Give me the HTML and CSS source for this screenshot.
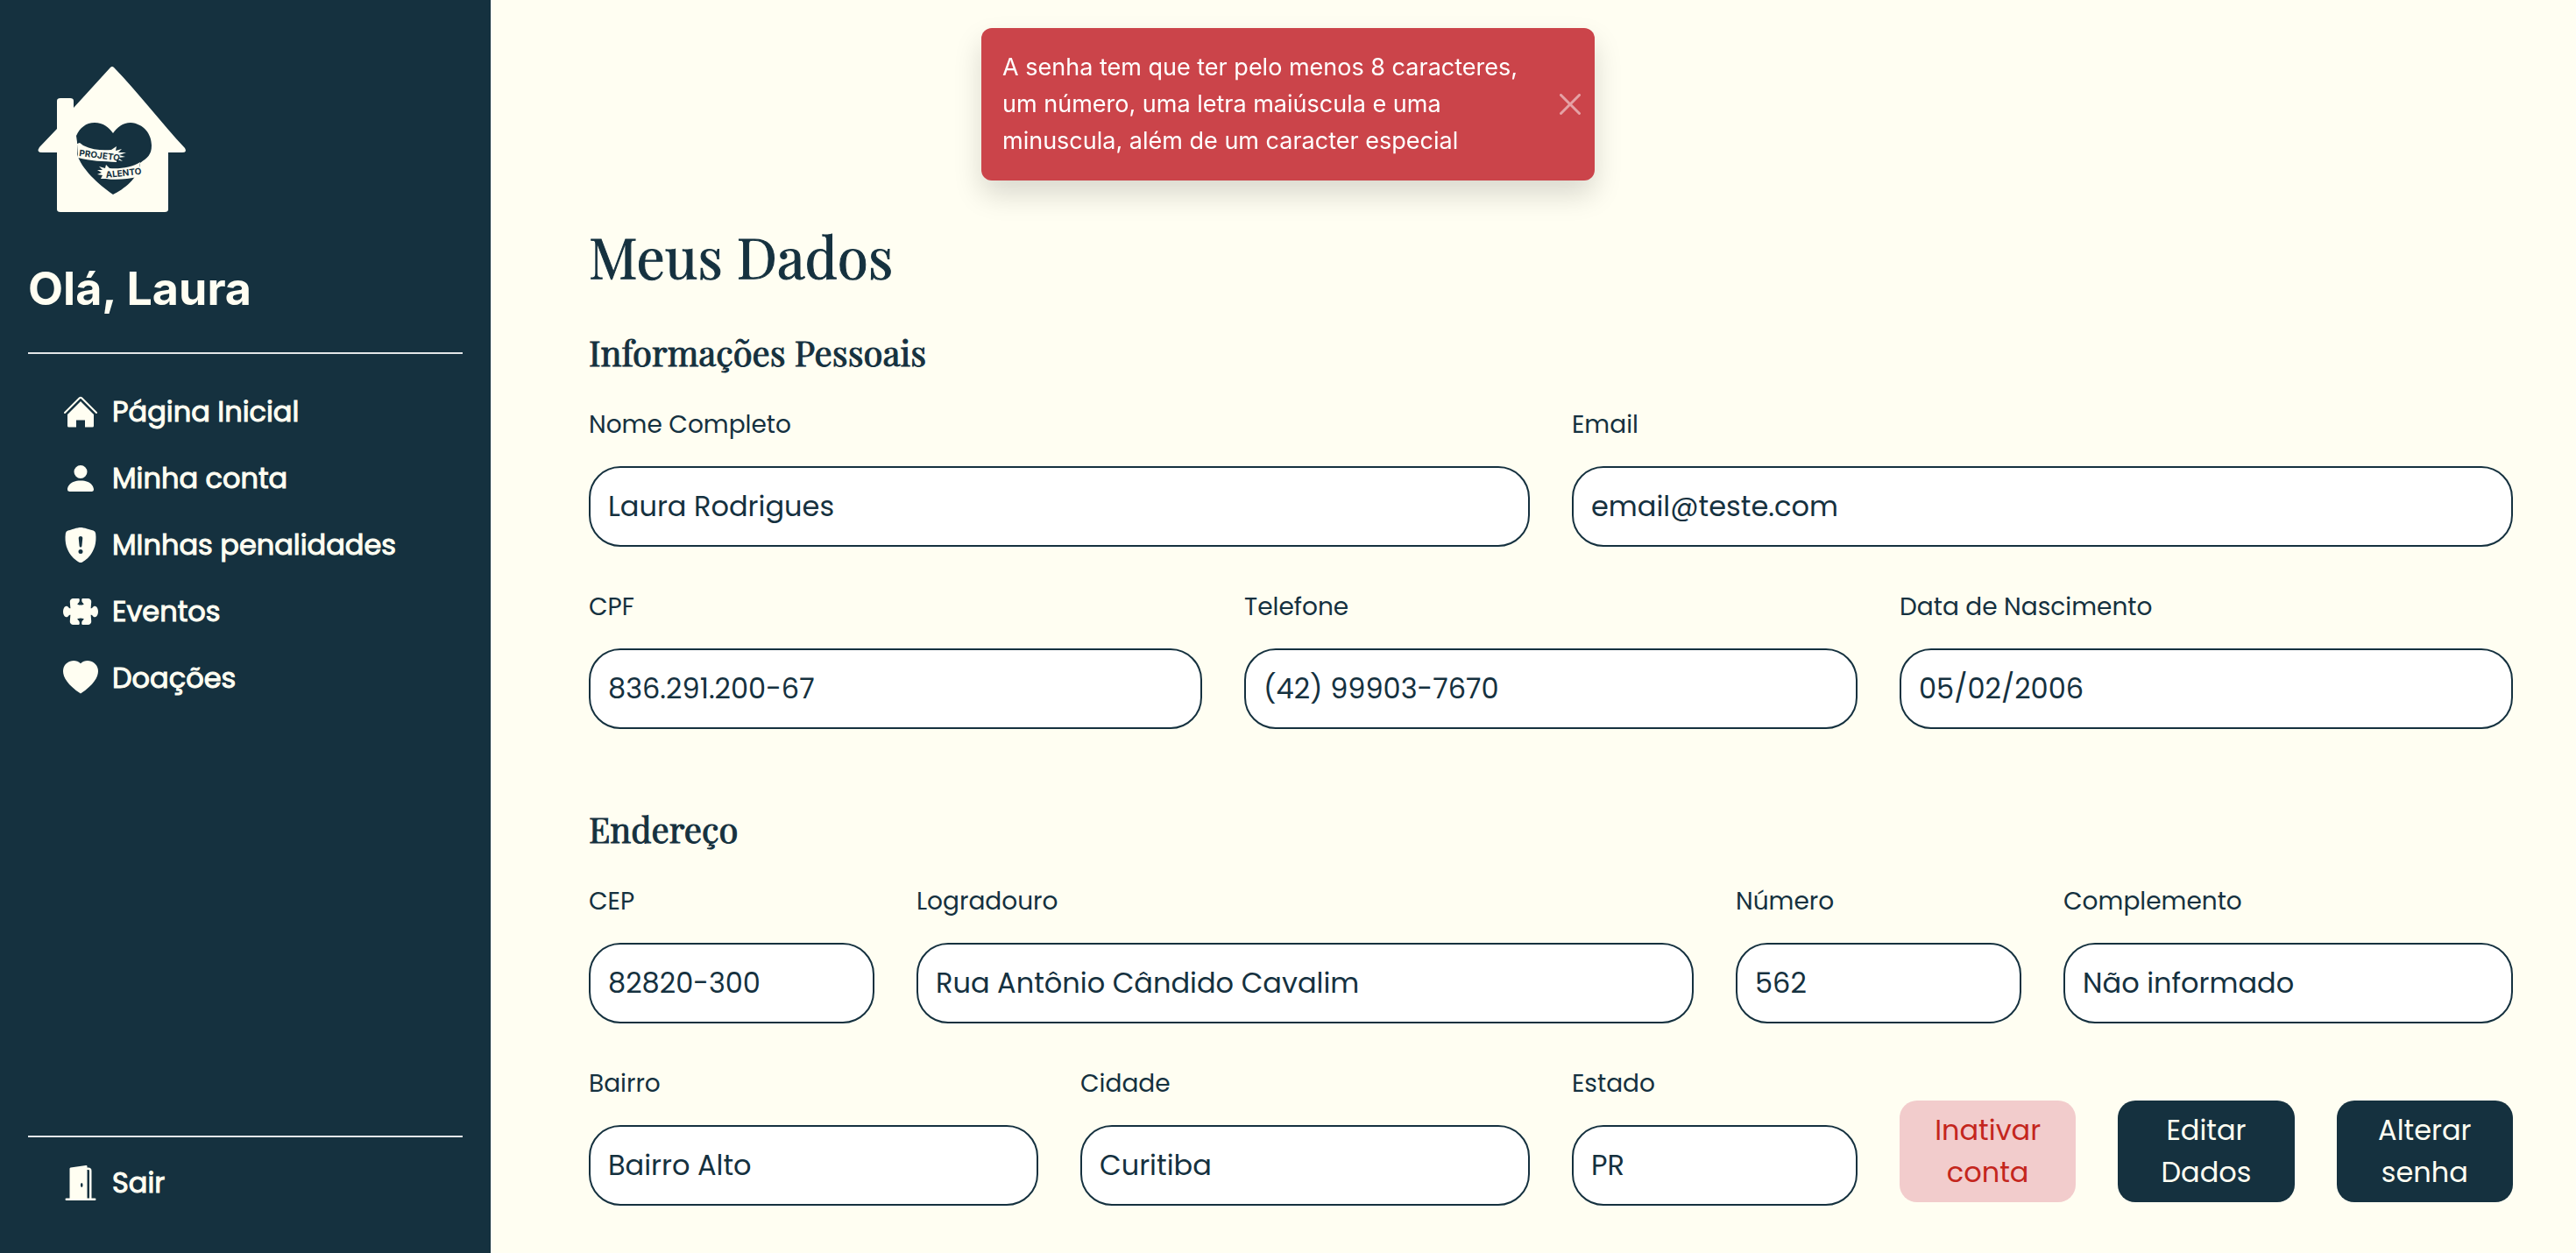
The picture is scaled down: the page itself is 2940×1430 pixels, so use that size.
FILE: index.html
```html
<!DOCTYPE html>
<html lang="pt-BR">
<head>
<meta charset="utf-8">
<meta name="viewport" content="width=device-width, initial-scale=1">
<title>Meus Dados</title>
<link rel="stylesheet" href="styles.css">
</head>
<body>
<div class="layout">
  <aside class="sidebar">
    <svg class="logo" viewBox="32 64 192 192" role="img" aria-label="Projeto Alento">
      <path class="logo-cream" d="M126 77q2-2 4 0C158 106 184 140 211 169q3 5-3 5H192V239q0 3-4 3H69q-4 0-4-3V174H48q-7 0-3-6L65 147V115q0-3 4-3H80q4 0 4 3V123z"/>
      <path class="logo-dark" d="M129 152C134 145 140 140 149 140C164 141 173 153 173 166C173 177 168 180 160 186C158 204 141 216 129 222C112 210 93 193 88 176L88 162L87 155C91 146 98 140 108 140C118 140 124 145 129 152Z"/>
      <path class="logo-cream" d="M88 164l3-1 4 3c10 5 22 6 32 5l6-4-1 5 7-2-4 4 9 0-8 3 7 2-8 1 5 4-7-2 0 3c-15-1-30-1-44-5z"/>
      <path class="logo-cream" d="M160 185c-9 6-23 8-35 7l-4-4-1 4-7-2 4 4-6 0 5 3-5 2 6 1-2 4 6 0c13 2 25 0 36-2z"/>
      <text class="logo-text" x="90" y="178" transform="rotate(7 90 178)">PROJETO</text>
      <text class="logo-text" x="121" y="203" transform="rotate(-6 121 203)">ALENTO</text>
    </svg>
    <h2 class="greeting">Olá, Laura</h2>
    <hr class="rule">
    <nav class="menu">
      <a class="menu-link" href="#"><svg class="icon" viewBox="0 0 40 40"><path class="roof" d="M2 21 18.500 4.500q1.500-1.500 3 0L38 21"/><path d="M20 8 35 23V36q0 1.500-1.500 1.500H25V29.500H15V37.500H6.500Q5 37.500 5 36V23z"/></svg>Página Inicial</a>
      <a class="menu-link" href="#"><svg class="icon" viewBox="0 0 16 16"><path d="M3 14s-1 0-1-1 1-4 6-4 6 3 6 4-1 1-1 1H3zm5-6a3 3 0 1 0 0-6 3 3 0 0 0 0 6z"/></svg>Minha conta</a>
      <a class="menu-link" href="#"><svg class="icon" viewBox="0 0 16 16"><path d="M8 0c-.69 0-1.843.265-2.928.56-1.11.3-2.229.655-2.887.87a1.54 1.54 0 0 0-1.044 1.262c-.596 4.477.787 7.795 2.465 9.99a11.777 11.777 0 0 0 2.517 2.453c.386.273.744.482 1.048.625.28.132.581.24.829.24s.548-.108.829-.24a7.159 7.159 0 0 0 1.048-.625 11.775 11.775 0 0 0 2.517-2.453c1.678-2.195 3.061-5.513 2.465-9.99a1.541 1.541 0 0 0-1.044-1.263 62.467 62.467 0 0 0-2.887-.87C9.843.266 8.69 0 8 0zm-.55 8.502L7.1 4.995a.905.905 0 1 1 1.8 0l-.35 3.507a.552.552 0 0 1-1.1 0zM8.002 12a1 1 0 1 1 0-2 1 1 0 0 1 0 2z"/></svg>MInhas penalidades</a>
      <a class="menu-link" href="#"><svg class="icon" viewBox="0 0 16 16"><path d="M3.112 3.645A1.5 1.5 0 0 1 4.605 2H7a.5.5 0 0 1 .5.5v.382c0 .696-.497 1.182-.872 1.469a.459.459 0 0 0-.115.118.113.113 0 0 0-.012.025L6.5 4.5v.003l.003.01c.004.01.014.028.036.053a.86.86 0 0 0 .27.194C7.09 4.9 7.51 5 8 5c.492 0 .912-.1 1.19-.24a.86.86 0 0 0 .271-.194.213.213 0 0 0 .039-.063v-.009a.112.112 0 0 0-.012-.025.459.459 0 0 0-.115-.118c-.375-.287-.872-.773-.872-1.469V2.5A.5.5 0 0 1 9 2h2.395a1.5 1.5 0 0 1 1.493 1.645L12.645 6.5h.237c.195 0 .42-.147.675-.48.21-.274.528-.52.943-.52.568 0 .947.447 1.154.862C15.877 6.807 16 7.387 16 8s-.123 1.193-.346 1.638c-.207.415-.586.862-1.154.862-.415 0-.733-.246-.943-.52-.255-.333-.48-.48-.675-.48h-.237l.243 2.855A1.5 1.5 0 0 1 11.395 14H9a.5.5 0 0 1-.5-.5v-.382c0-.696.497-1.182.872-1.469a.459.459 0 0 0 .115-.118.113.113 0 0 0 .012-.025L9.5 11.5v-.003a.214.214 0 0 0-.039-.064.859.859 0 0 0-.27-.193C8.91 11.1 8.49 11 8 11c-.491 0-.912.1-1.19.24a.859.859 0 0 0-.271.194.214.214 0 0 0-.039.063v.003l.001.006a.113.113 0 0 0 .012.025c.016.027.05.068.115.118.375.287.872.773.872 1.469v.382a.5.5 0 0 1-.5.5H4.605a1.5 1.5 0 0 1-1.493-1.645L3.356 9.5h-.238c-.195 0-.42.147-.675.48-.21.274-.528.52-.943.52-.568 0-.947-.447-1.154-.862C.123 9.193 0 8.613 0 8s.123-1.193.346-1.638C.553 5.947.932 5.5 1.5 5.5c.415 0 .733.246.943.52.255.333.48.48.675.48h.238l-.244-2.855z"/></svg>Eventos</a>
      <a class="menu-link" href="#"><svg class="icon" viewBox="0 0 16 16"><path d="M8 1.314C12.438-3.248 23.534 4.735 8 15-7.534 4.736 3.562-3.248 8 1.314z"/></svg>Doações</a>
    </nav>
    <div class="sidebar-end">
      <hr class="rule">
      <a class="menu-link" href="#"><svg class="icon" viewBox="0 0 16 16"><path d="M1.5 15a.5.5 0 0 0 0 1h13a.5.5 0 0 0 0-1H13V2.5A1.5 1.5 0 0 0 11.5 1H11V.5a.5.5 0 0 0-.57-.495l-7 1A.5.5 0 0 0 3 1.5V15H1.500zM11 2h.5a.5.5 0 0 1 .5.5V15h-1V2zm-2.500 8c-.276 0-.5-.448-.5-1s.224-1 .5-1 .5.448.5 1-.224 1-.5 1z"/></svg>Sair</a>
    </div>
  </aside>

  <main class="content">
    <h1 class="title">Meus Dados</h1>
    <form>
      <section class="section">
        <h2 class="subtitle">Informações Pessoais</h2>
        <div class="fields">
          <div class="field span-6"><label for="nome">Nome Completo</label><input id="nome" type="text" value="Laura Rodrigues" readonly></div>
          <div class="field span-6"><label for="email">Email</label><input id="email" type="email" value="email@teste.com" readonly></div>
          <div class="field span-4"><label for="cpf">CPF</label><input id="cpf" type="text" value="836.291.200-67" readonly></div>
          <div class="field span-4"><label for="telefone">Telefone</label><input id="telefone" type="tel" value="(42) 99903-7670" readonly></div>
          <div class="field span-4"><label for="nascimento">Data de Nascimento</label><input id="nascimento" type="text" value="05/02/2006" readonly></div>
        </div>
      </section>
      <section class="section">
        <h2 class="subtitle">Endereço</h2>
        <div class="fields">
          <div class="field span-2"><label for="cep">CEP</label><input id="cep" type="text" value="82820-300" readonly></div>
          <div class="field span-5"><label for="logradouro">Logradouro</label><input id="logradouro" type="text" value="Rua Antônio Cândido Cavalim" readonly></div>
          <div class="field span-2"><label for="numero">Número</label><input id="numero" type="text" value="562" readonly></div>
          <div class="field span-3"><label for="complemento">Complemento</label><input id="complemento" type="text" value="Não informado" readonly></div>
          <div class="field span-3"><label for="bairro">Bairro</label><input id="bairro" type="text" value="Bairro Alto" readonly></div>
          <div class="field span-3"><label for="cidade">Cidade</label><input id="cidade" type="text" value="Curitiba" readonly></div>
          <div class="field span-2"><label for="estado">Estado</label><input id="estado" type="text" value="PR" readonly></div>
          <div class="actions span-4">
            <button class="button danger" type="button">Inativar conta</button>
            <button class="button" type="button">Editar Dados</button>
            <button class="button" type="button">Alterar senha</button>
          </div>
        </div>
      </section>
    </form>
  </main>
</div>

<div class="toast" role="alert">
  <p class="toast-text">A senha tem que ter pelo menos 8 caracteres, um número, uma letra maiúscula e uma minuscula, além de um caracter especial</p>
  <button class="toast-close" type="button" aria-label="Fechar"><svg viewBox="0 0 16 16"><path d="M.293.293a1 1 0 0 1 1.414 0L8 6.586 14.293.293a1 1 0 1 1 1.414 1.414L9.414 8l6.293 6.293a1 1 0 0 1-1.414 1.414L8 9.414l-6.293 6.293a1 1 0 0 1-1.414-1.414L6.586 8 .293 1.707a1 1 0 0 1 0-1.414z"/></svg></button>
</div>
</body>
</html>
```
FILE: styles.css
```css
:root {
  --navy: #15313f;
  --cream: #fffef2;
  --gutter: 48px;
}

* {
  box-sizing: border-box;
}

body,
h1,
h2,
p,
hr {
  margin: 0;
}

body {
  background: var(--cream);
  color: var(--navy);
  font-family: Poppins, Inter, sans-serif;
}

.layout {
  display: flex;
  min-height: 100vh;
}

/* Sidebar */
.sidebar {
  flex: 0 0 560px;
  display: flex;
  flex-direction: column;
  padding: 64px 32px 56px;
  background: var(--navy);
  color: var(--cream);
}

.logo {
  width: 192px;
  height: 192px;
}

.logo-cream {
  fill: var(--cream);
}

.logo-dark {
  fill: var(--navy);
}

.logo-text {
  fill: var(--navy);
  font: bold 10px Inter, sans-serif;
}

.greeting {
  margin: 42px 0 40px;
  font: bold 52px/64px Inter, sans-serif;
}

.rule {
  height: 2px;
  border: 0;
  background: #e3e6e8;
}

.menu {
  display: flex;
  flex-direction: column;
  gap: 28px;
  margin-top: 42px;
}

.menu-link {
  display: flex;
  align-items: center;
  gap: 16px;
  padding-left: 40px;
  color: inherit;
  font-size: 32px;
  line-height: 48px;
  text-decoration: none;
  -webkit-text-stroke: 1px currentColor;
}

.icon {
  flex: none;
  width: 40px;
  height: 40px;
  fill: currentColor;
}

.roof {
  fill: none;
  stroke: currentColor;
  stroke-width: 2;
  stroke-linecap: round;
}

.sidebar-end {
  display: flex;
  flex-direction: column;
  gap: 28px;
  margin-top: auto;
}

/* Content */
.content {
  flex: 1;
  padding: 250px 72px 48px 112px;
}

.title,
.subtitle {
  font-family: "Playfair Display", "Liberation Serif", serif;
  font-weight: 400;
  -webkit-text-stroke: 1px currentColor;
}

.title {
  margin-bottom: 40px;
  font-size: 64px;
  line-height: 84px;
}

.subtitle {
  margin-bottom: 34px;
  font-size: 40px;
  line-height: 56px;
}

.section + .section {
  margin-top: 86px;
}

.fields {
  display: grid;
  grid-template-columns: repeat(12, minmax(0, 1fr));
  gap: 48px var(--gutter);
}

.span-2 { grid-column: span 2; }
.span-3 { grid-column: span 3; }
.span-4 { grid-column: span 4; }
.span-5 { grid-column: span 5; }
.span-6 { grid-column: span 6; }

.field {
  display: flex;
  flex-direction: column;
  gap: 26px;
}

.field label {
  font-size: 28px;
  line-height: 42px;
}

.field input {
  width: 100%;
  height: 92px;
  padding: 0 20px;
  border: 2px solid var(--navy);
  border-radius: 36px;
  background: #fff;
  color: inherit;
  font: inherit;
  font-size: 32px;
}

.actions {
  display: grid;
  grid-template-columns: repeat(3, 1fr);
  gap: var(--gutter);
  align-self: end;
  padding-bottom: 4px;
}

.button {
  padding: 10px 24px;
  border: 0;
  border-radius: 20px;
  background: var(--navy);
  color: var(--cream);
  font: inherit;
  font-size: 32px;
  line-height: 48px;
}

.danger {
  background: #f2cccc;
  color: #c4261d;
}

/* Toast */
.toast {
  position: fixed;
  top: 32px;
  right: 0;
  left: 0;
  display: flex;
  align-items: center;
  gap: 24px;
  width: 700px;
  margin: 0 auto;
  padding: 24px 16px 24px 24px;
  border-radius: 12px;
  background: #cb444a;
  box-shadow: 0 16px 32px rgba(0, 0, 0, .15);
  color: #fff;
}

.toast-text {
  flex: 1;
  font: 27px/42px Inter, sans-serif;
}

.toast-close {
  display: flex;
  padding: 0;
  border: 0;
  background: none;
  color: inherit;
  opacity: .5;
}

.toast-close svg {
  width: 24px;
  height: 24px;
  fill: currentColor;
}
```
